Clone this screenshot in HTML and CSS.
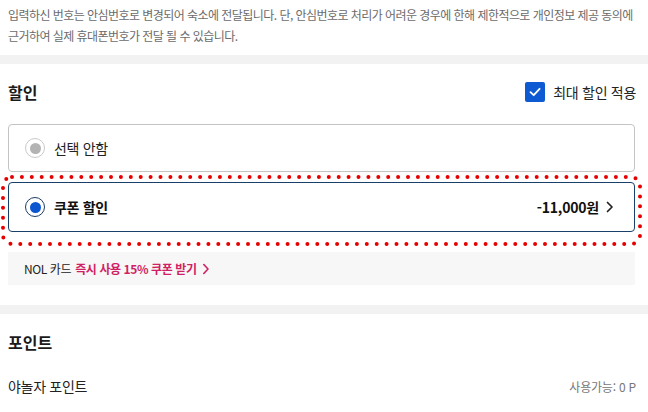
FILE: index.html
```html
<!DOCTYPE html>
<html lang="ko">
<head>
<meta charset="utf-8">
<link rel="stylesheet" href="styles.css">
</head>
<body>
<div class="page">
  <section class="notice">
    <p>입력하신 번호는 안심번호로 변경되어 숙소에 전달됩니다. 단, 안심번호로 처리가 어려운 경우에 한해 제한적으로 개인정보 제공 동의에 근거하여 실제 휴대폰번호가 전달 될 수 있습니다.</p>
  </section>
  <div class="band"></div>
  <section class="discount">
    <div class="head">
      <h2 class="title">할인</h2>
      <label class="maxcheck">
        <span class="checkbox"><svg width="14" height="14" viewBox="0 0 14 14"><path d="M2.5 7.2 L5.7 10.2 L11.6 3.8" fill="none" stroke="#fff" stroke-width="1.8" stroke-linecap="round" stroke-linejoin="round"/></svg></span>
        <span>최대 할인 적용</span>
      </label>
    </div>
    <div class="options">
      <div class="option">
        <span class="radio radio-off"><span class="dot"></span></span>
        <span class="opt-label">선택 안함</span>
      </div>
      <div class="option option-on">
        <span class="radio radio-on"><span class="dot"></span></span>
        <span class="opt-label strong">쿠폰 할인</span>
        <span class="amount">-11,000원</span>
        <svg class="chev" width="8" height="12" viewBox="0 0 8 12"><path d="M1.5 1.5 L6 6 L1.5 10.5" fill="none" stroke="#222" stroke-width="1.7" stroke-linecap="round" stroke-linejoin="round"/></svg>
        <svg class="annot" width="645" height="74" viewBox="0 0 645 74"><rect x="3" y="2" width="637" height="67" rx="9" ry="9" fill="none" stroke="#e60000" stroke-width="4" stroke-linecap="round" stroke-dasharray="0 9.9"/></svg>
      </div>
    </div>
    <div class="banner">
      <span>NOL 카드</span>
      <span class="promo">즉시 사용 15% 쿠폰 받기</span>
      <svg width="8" height="12" viewBox="0 0 8 12"><path d="M1.8 1.5 L6 6 L1.8 10.5" fill="none" stroke="#d01f64" stroke-width="1.6" stroke-linecap="round" stroke-linejoin="round"/></svg>
    </div>
  </section>
  <div class="band"></div>
  <section class="points">
    <h2 class="title">포인트</h2>
    <div class="row">
      <span class="row-label">야놀자 포인트</span>
      <span class="avail">사용가능: 0 P</span>
    </div>
  </section>
</div>
</body>
</html>
```
FILE: styles.css
```css
* { box-sizing: border-box; }
html, body { margin: 0; padding: 0; background: #fff; }
body {
  font-family: "Noto Sans CJK KR", "Noto Sans", sans-serif;
  color: #222;
  width: 648px;
  overflow: hidden;
}
.notice { padding: 4px 13px 9px 8px; }
.notice p {
  margin: 0;
  font-size: 12px;
  line-height: 21px;
  color: #6b6b6b;
  letter-spacing: -0.55px;
}
.band { height: 9px; background: #f2f2f2; }
.discount { padding: 18px 13px 20px 8px; }
.head {
  display: flex;
  align-items: center;
  justify-content: space-between;
  height: 20px;
}
.title {
  margin: 0;
  font-size: 16px;
  font-weight: 700;
  color: #1a1a1a;
  line-height: 20px;
}
.maxcheck {
  display: flex;
  align-items: center;
  gap: 8px;
  font-size: 14px;
  color: #222;
  margin-right: -1px;
  letter-spacing: -0.3px;
}
.checkbox {
  width: 20px; height: 20px;
  background: #0e5ad3;
  border-radius: 2px;
  display: flex; align-items: center; justify-content: center;
}
.options {
  margin-top: 22px;
  display: flex;
  flex-direction: column;
  gap: 10px;
}
.option {
  position: relative;
  height: 48px;
  border: 1px solid #c4c4c4;
  border-radius: 4px;
  display: flex;
  align-items: center;
  padding: 0 20px 0 16px;
  font-size: 14px;
}
.option-on {
  height: 50px;
  border-color: #18406b;
}
.radio {
  width: 20px; height: 20px;
  border-radius: 50%;
  display: flex; align-items: center; justify-content: center;
  margin-right: 9px;
}
.radio-off { border: 1.5px solid #c9c9c9; }
.radio-off .dot { width: 11px; height: 11px; border-radius: 50%; background: #b3b3b3; }
.radio-on { border: 1.5px solid #1e3b66; }
.radio-on .dot { width: 11px; height: 11px; border-radius: 50%; background: #0e56cf; }
.opt-label { flex: 1; color: #222; letter-spacing: -0.3px; }
.strong { font-weight: 700; color: #111; }
.amount { font-weight: 700; color: #111; margin-right: 7px; letter-spacing: -0.2px; }
.chev { display: block; }
.annot {
  position: absolute;
  left: -9px;
  top: -8px;
  pointer-events: none;
}
.banner {
  margin-top: 20px;
  height: 33px;
  background: #f7f7f7;
  display: flex;
  align-items: center;
  padding-left: 16px;
  font-size: 12px;
  color: #222;
  gap: 4px;
  letter-spacing: -0.4px;
}
.promo { color: #d01f64; font-weight: 700; }
.banner svg { margin-left: 1px; }
.points { padding: 18px 12px 0 8px; }
.points .title { line-height: 20px; }
.row {
  margin-top: 24px;
  display: flex;
  justify-content: space-between;
  align-items: center;
  height: 20px;
}
.row-label { font-size: 14px; color: #222; letter-spacing: -0.3px; }
.avail { font-size: 12px; color: #777; letter-spacing: -0.2px; }
```
